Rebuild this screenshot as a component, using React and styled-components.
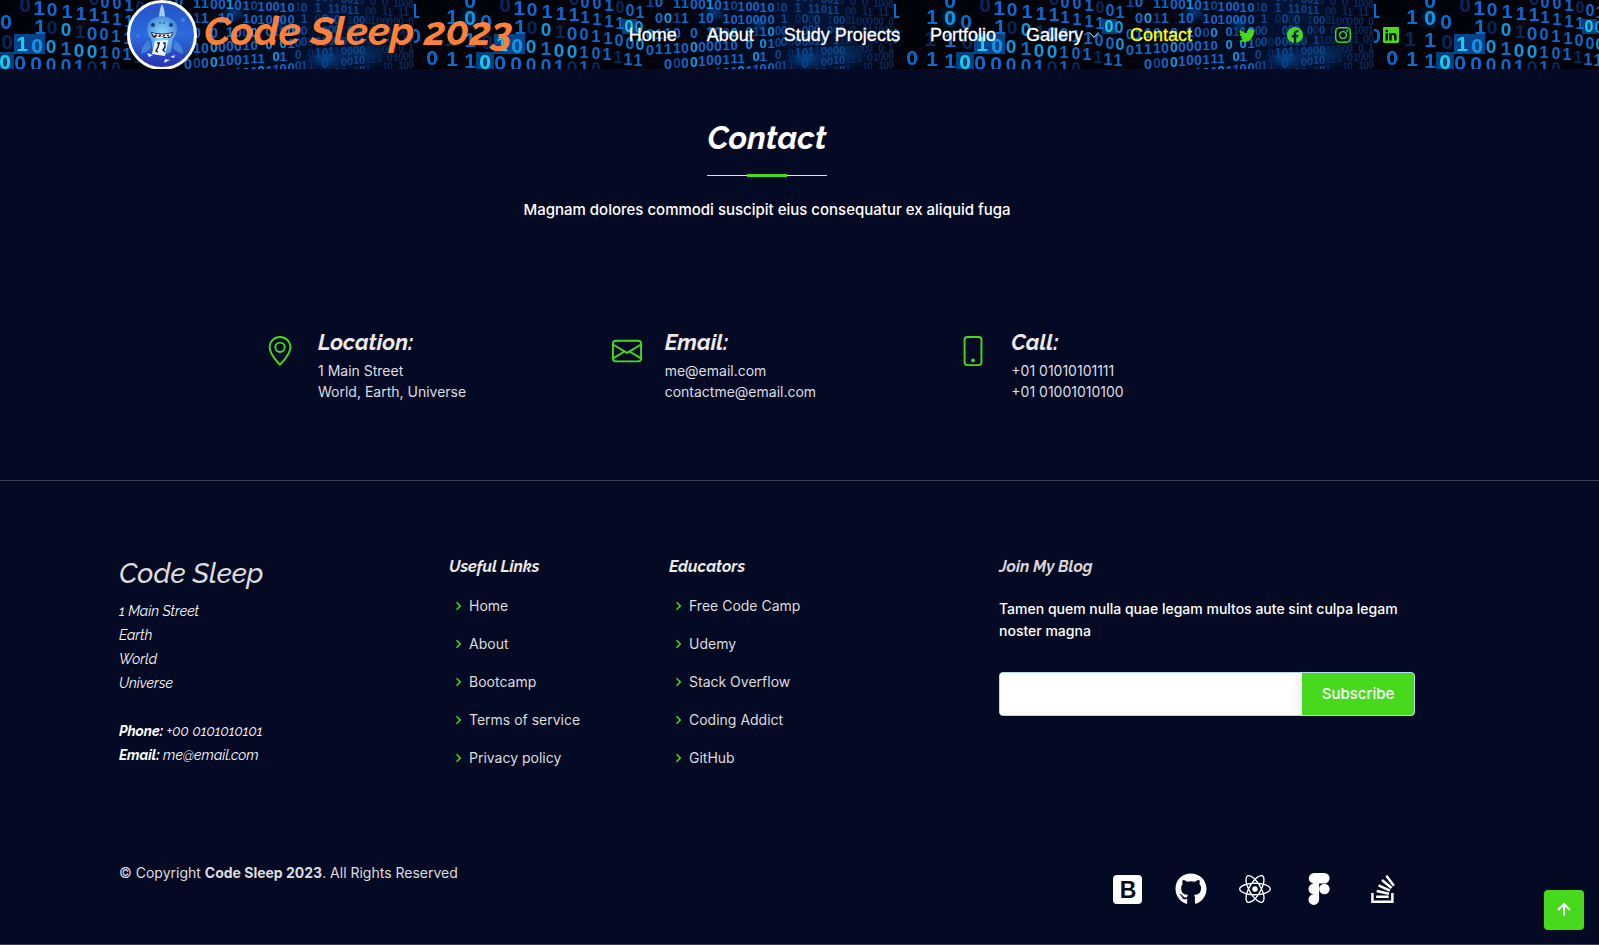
import React from 'react';
import styled, { createGlobalStyle } from 'styled-components';
import {
  BsTwitter, BsFacebook, BsInstagram, BsLinkedin, BsChevronDown,
  BsGeoAlt, BsEnvelope, BsPhone,
} from 'react-icons/bs';
import { BiChevronRight, BiUpArrowAlt } from 'react-icons/bi';
import { FaGithub, FaReact, FaStackOverflow } from 'react-icons/fa';

const GREEN = '#47d91c';
const NAVY = '#050a24';
const BODY_FONT = 'Inter, "Liberation Sans", sans-serif';
const HEAD_FONT = 'Raleway, Lato, "Open Sans", sans-serif';

const GlobalStyle = createGlobalStyle`
  *, *::before, *::after { box-sizing: border-box; }
  body {
    margin: 0;
    background: ${NAVY};
    color: #fff;
    font: 400 16px/24px ${BODY_FONT};
  }
  a { color: inherit; text-decoration: none; }
  h1, h2, h3, h4, p, ul, address { margin: 0; padding: 0; }
  ul { list-style: none; }
`;

const Page = styled.div`
  min-height: 100vh;
  display: flex;
  flex-direction: column;
  border-bottom: 1px solid #3a3d52;
`;

const Container = styled.div`
  max-width: 1320px;
  margin: 0 auto;
  padding: 0 12px;
`;

/* ---------- header ---------- */

const Header = styled.header`
  position: relative;
  padding-right: 65px;
  background: #01030b;
  overflow: hidden;
`;

const Rain = styled.svg`
  position: absolute;
  inset: 0;
  width: 100%;
  height: 100%;
`;

const HeaderRow = styled(Container)`
  position: relative;
  height: 69px;
  display: flex;
  align-items: center;
  padding: 0 28px 0 20px;
`;

const Brand = styled.a`
  display: flex;
  align-items: center;
  gap: 7px;
  margin-right: auto;
  color: #ff8139;
  font: italic 700 40px/50px ${HEAD_FONT};
  white-space: nowrap;

  svg { flex: none; }
  span { padding-bottom: 8px; }
`;

const NavList = styled.ul`
  display: flex;
  gap: 30px;
  font: 400 18px/28px "Liberation Sans", Arial, sans-serif;
  white-space: nowrap;
`;

const NavLink = styled.a`
  display: flex;
  align-items: center;
  gap: 5px;
  color: ${(p) => (p.$active ? '#ffff00' : '#fff')};
  -webkit-text-stroke: 0.3px currentColor;
  svg { width: 12px; height: 12px; }
`;

const Social = styled.div`
  display: flex;
  gap: 32px;
  margin-left: 47px;
  color: ${GREEN};
  a { display: block; }
  svg { display: block; width: 16px; height: 16px; }
`;

/* ---------- contact ---------- */

const Main = styled.main`
  padding: 48px 65px 78px 0;
  border-bottom: 1px solid #3d4156;
`;

const Title = styled.h2`
  position: relative;
  padding-bottom: 18px;
  margin-bottom: 20px;
  text-align: center;
  font: italic 700 32px/42px ${HEAD_FONT};

  &::before, &::after {
    content: '';
    position: absolute;
    left: 50%;
    transform: translateX(-50%);
  }
  &::before { bottom: 1px; width: 120px; height: 1px; background: #dde; }
  &::after { bottom: 0; width: 40px; height: 3px; background: ${GREEN}; }
`;

const Lead = styled.p`
  text-align: center;
  font-weight: 500;
  font-size: 15px;
  line-height: 26px;
`;

const InfoGrid = styled.div`
  max-width: 1040px;
  margin: 105px auto 0;
  display: grid;
  grid-template-columns: repeat(3, 1fr);
`;

const InfoItem = styled.div`
  display: grid;
  grid-template-columns: 32px 1fr;
  column-gap: 22px;
  padding-left: 17px;
  font-size: 14px;
  line-height: 21px;
  color: #dcdde2;

  > svg { width: 30px; height: 30px; margin-top: 8px; color: ${GREEN}; justify-self: center; }
`;

const InfoTitle = styled.h4`
  margin-bottom: 4px;
  font: italic 700 22px/28px ${HEAD_FONT};
  color: #ebe8e8;
`;

/* ---------- footer ---------- */

const Footer = styled.footer`
  flex: 1;
  padding: 74px 65px 0 0;
`;

const FooterGrid = styled.div`
  display: grid;
  grid-template-columns: 3fr 2fr 3fr 4fr;
  margin: 0 -12px;
  > * { padding: 0 12px; }
`;

const Company = styled.address`
  font: italic 400 14px/24px ${HEAD_FONT};
`;

const CompanyName = styled.h3`
  margin-bottom: 6px;
  font: italic 500 28px/38px ${HEAD_FONT};
  color: #dcdcdc;
`;

const ColumnTitle = styled.h4`
  font: italic 700 16px/24px ${HEAD_FONT};
  color: ${(p) => (p.$muted ? '#dcd6d8' : '#ebe8e8')};
`;

const LinkList = styled.ul`
  margin-top: 15px;
  display: grid;
  gap: 14px;
  font-size: 14px;
  line-height: 24px;
  color: #dcdcdc;
`;

const FooterLink = styled.a`
  display: flex;
  align-items: center;
  svg { width: 18px; height: 18px; margin-right: 2px; color: ${GREEN}; }
`;

const BlogText = styled.p`
  margin: 19px 0 30px;
  font-weight: 500;
  font-size: 14px;
  line-height: 22px;
`;

const Subscribe = styled.form`
  display: flex;
  height: 44px;
  border: 1px solid #b5d9f5;
  border-radius: 4px;
  background: #fff;
  overflow: hidden;

  input {
    flex: 1;
    min-width: 0;
    padding: 0 10px;
    border: 0;
    outline: 0;
    font: 400 16px/24px ${BODY_FONT};
  }
  button {
    width: 112px;
    border: 0;
    padding: 0;
    background: ${GREEN};
    color: #fff;
    font: 500 15px/24px ${BODY_FONT};
    box-shadow: 0 2px 15px rgba(0, 0, 0, 0.12);
    cursor: pointer;
  }
`;

const FooterBottom = styled.div`
  display: flex;
  justify-content: space-between;
  align-items: flex-start;
  margin-top: 91px;
  padding-right: 16px;
  font-size: 14px;
  line-height: 24px;
  color: #dcdcdc;
`;

const Tools = styled.div`
  display: flex;
  gap: 32px;
  padding-top: 12px;
  color: #fff;
  svg { display: block; width: 32px; height: 32px; }
`;

const BackTop = styled.button`
  position: fixed;
  right: 15px;
  bottom: 15px;
  width: 40px;
  height: 40px;
  display: grid;
  place-items: center;
  padding: 0;
  border: 0;
  border-radius: 4px;
  background: ${GREEN};
  color: #fff;
  cursor: pointer;
  svg { width: 24px; height: 24px; }
`;

/* ---------- binary backdrop ---------- */

/* [digit, x, y, level] — level 0 faint, 1 normal, 2 light, 3 glowing */
const NEAR = [
  [1, 0, 10, 1], [0, 1, 35, 1], [0, 18, 57, 1], [1, 38, 16, 1], [1, 38, 58, 1],
  [0, 56, 0, 1], [0, 56, 17, 2], [1, 56, 39, 1], [1, 56, 60, 1], [1, 36, 38, 0],
  [0, 72, 21, 1], [0, 71, 61, 3], [0, 91, 4, 0], [0, 73, 41, 0],
  [1, 88, 43, 3], [0, 86, 62, 1], [0, 103, 45, 2], [0, 102, 63, 1],
  [1, 105, 7, 1], [1, 106, 26, 1], [0, 118, 9, 1], [0, 118, 27, 0], [0, 117, 46, 2], [0, 117, 64, 1],
  [1, 133, 11, 1], [0, 132, 29, 2], [1, 132, 48, 1], [0, 132, 65, 1],
  [1, 147, 13, 1], [1, 146, 31, 0], [0, 145, 50, 2], [1, 145, 66, 1],
  [1, 160, 14, 1], [0, 158, 33, 1], [0, 158, 51, 2], [0, 158, 67, 0], [0, 160, -2, 0],
  [0, 171, 2, 1], [1, 171, 17, 1], [0, 170, 34, 1], [1, 170, 52, 1], [1, 170, 67, 1],
  [0, 183, 3, 1], [1, 183, 19, 1], [1, 182, 36, 1], [0, 182, 53, 1], [0, 182, 68, 0],
  [1, 195, 5, 1], [1, 195, 21, 1], [1, 194, 38, 1], [1, 193, 54, 1],
  [0, 206, 7, 0], [1, 206, 23, 1], [0, 205, 40, 1], [1, 204, 57, 0],
  [0, 216, 10, 1], [0, 215, 26, 3], [0, 216, 43, 1], [1, 214, 59, 1],
  [1, 226, 12, 1], [0, 225, 27, 2], [0, 226, 44, 2], [1, 224, 60, 1],
];

function farDigits() {
  const out = [];
  let seed = 23;
  const rnd = () => {
    seed = (seed * 16807) % 2147483647;
    return seed / 2147483647;
  };
  let x = 236;
  while (x < 480) {
    const t = (x - 236) / 244;
    const step = 9 - 4 * t;
    const pitch = 16 - 6 * t;
    const tilt = (x - 236) * 0.1;
    for (let y = -30; y < 78; y += pitch) {
      const py = y + tilt * (1 - (y + 20) / 160);
      const r = rnd();
      const digit = rnd() > 0.45 ? 0 : 1;
      if (r < 0.2 || py < -4 || py > 76) continue;
      const shade = t > 0.8 ? 0 : t > 0.5 ? (r > 0.4 ? 4 : 0) : r > 0.88 ? 2 : r > 0.35 ? 1 : 4;
      out.push([digit, Math.round(x), Math.round(py), shade, Math.round(15 - 5 * t)]);
    }
    x += step;
  }
  return out;
}

const DIGITS = [...NEAR.map((d) => [...d, d[1] < 110 ? 21 : d[1] < 165 ? 19 : 16]), ...farDigits()];
const SHADES = ['#06275c', '#0a6ad0', '#0b9be6', '#12d0f4', '#08468f'];

function BinaryRain() {
  return (
    <Rain aria-hidden="true">
      <defs>
        <radialGradient id="glow">
          <stop offset="0" stopColor="#0879e8" stopOpacity="0.7" />
          <stop offset="1" stopColor="#0548a0" stopOpacity="0" />
        </radialGradient>
        <linearGradient id="haze">
          <stop offset="0" stopColor="#021a4a" stopOpacity="0" />
          <stop offset="0.7" stopColor="#03296a" stopOpacity="0.45" />
          <stop offset="1" stopColor="#021435" stopOpacity="0.2" />
        </linearGradient>
        <pattern id="tile" x="-66" y="0" width="480" height="69" patternUnits="userSpaceOnUse">
          <rect width="480" height="69" fill="#01030b" />
          <rect x="230" width="250" height="69" fill="url(#haze)" />
          <rect x="80" y="34" width="31" height="20" fill="#075fc4" opacity="0.7" />
          <rect x="62" y="52" width="18" height="17" fill="#0869c4" opacity="0.6" />
          <rect x="208" y="19" width="15" height="15" fill="#0869c4" opacity="0.6" />
          <ellipse cx="56" cy="18" rx="12" ry="14" fill="url(#glow)" opacity="0.6" />
          <ellipse cx="300" cy="13" rx="14" ry="10" fill="url(#glow)" opacity="0.7" />
          <ellipse cx="392" cy="59" rx="24" ry="12" fill="url(#glow)" opacity="0.8" />
          <ellipse cx="345" cy="24" rx="10" ry="9" fill="url(#glow)" opacity="0.6" />
          <ellipse cx="430" cy="54" rx="34" ry="14" fill="url(#glow)" opacity="0.5" />
          <g fontFamily="Liberation Sans, sans-serif" textAnchor="middle">
            {DIGITS.map(([d, x, y, level, size], i) => (
              <text key={i} x={x} y={y + Math.round(size * 0.36)} fontSize={size} fontWeight="700" fill={SHADES[level]}>
                {d}
              </text>
            ))}
          </g>
        </pattern>
      </defs>
      <rect width="100%" height="100%" fill="url(#tile)" />
    </Rain>
  );
}

function SharkLogo() {
  return (
    <svg width="70" height="70" viewBox="0 0 70 70" aria-hidden="true">
      <defs>
        <linearGradient id="sea" x1="0" y1="0" x2="0" y2="1">
          <stop offset="0" stopColor="#2450c8" />
          <stop offset="0.5" stopColor="#2b6bdc" />
          <stop offset="1" stopColor="#2a2fb0" />
        </linearGradient>
        <radialGradient id="skin" cx="0.5" cy="0.5" r="0.6">
          <stop offset="0" stopColor="#9fe0fb" />
          <stop offset="0.6" stopColor="#5fa9e8" />
          <stop offset="1" stopColor="#3a79d2" />
        </radialGradient>
      </defs>
      <circle cx="35" cy="35" r="33.5" fill="url(#sea)" stroke="#fff" strokeWidth="3" />
      <circle cx="56" cy="20" r="2" fill="#4a83e6" />
      <circle cx="11" cy="36" r="2" fill="#3f78e0" />
      <path d="M22 40 Q14 46 14 54 Q20 52 24 48 Z M48 40 Q56 46 56 54 Q50 52 46 48 Z" fill="#4083d8" />
      <path d="M35 4 Q32 9 32 20 L38 20 Q38 9 35 4 Z" fill="#a5cdf2" />
      <path d="M35 16 Q23 17 20 26 Q19 34 24 39 L26 52 Q35 57 44 52 L46 39 Q51 34 50 26 Q47 17 35 16 Z" fill="url(#skin)" />
      <circle cx="26" cy="25" r="2" fill="#1a3878" />
      <circle cx="44" cy="25" r="2" fill="#1a3878" />
      <circle cx="33" cy="23" r="1" fill="#2e62a8" />
      <circle cx="37" cy="23" r="1" fill="#2e62a8" />
      <path d="M24 32 Q35 35 46 32 Q45 38 41 38 L29 38 Q25 38 24 32 Z" fill="#2a1c35" />
      <path d="M25 33 l2 3 2 -2 2 3 2 -3 2 3 2 -3 2 3 2 -3 2 3 2 -4 Q35 36 25 33 Z M28 38 l2 -2 2 2 2 -2 2 2 2 -2 2 2 2 -2 Z" fill="#fff" />
      <path d="M28 41 L41 40 L38 56 L25 54 Z" fill="#f5f8ff" />
      <path d="M30 43 l3 0 M32 43 l-1 4 l-2 4 l2 1 M36 43 l2 0 l0 4 l-2 3 l2 2" fill="none" stroke="#16254e" strokeWidth="1.5" />
      <path d="M20 53 l6 2 -4 2 Z M38 59 l5 1 -6 3 Z M43 57 l5 -2 -1 3 Z" fill="#dbe8ff" />
    </svg>
  );
}

function BootstrapLogo() {
  return (
    <svg viewBox="0 0 32 32" aria-hidden="true">
      <rect x="2" y="2" width="29" height="29" rx="4" fill="currentColor" />
      <text x="17" y="25" textAnchor="middle" fontFamily="Liberation Sans, sans-serif" fontWeight="700" fontSize="23" fill={NAVY}>B</text>
    </svg>
  );
}

function FigmaLogo() {
  return (
    <svg viewBox="0 0 32 32" fill="currentColor" aria-hidden="true">
      <path d="M11.3 0h10a5.3 5.3 0 0 1 0 10.6h-5.2v16a5.3 5.3 0 1 1-5.3-5.3 5.3 5.3 0 0 1 0-10.7 5.3 5.3 0 0 1 .5-10.6Z" />
      <circle cx="21.4" cy="16" r="5.3" />
    </svg>
  );
}

/* ---------- data ---------- */

const NAV = ['Home', 'About', 'Study Projects', 'Portfolio', 'Gallery', 'Contact'];
const SOCIAL = [['Twitter', BsTwitter], ['Facebook', BsFacebook], ['Instagram', BsInstagram], ['LinkedIn', BsLinkedin]];
const INFO = [
  ['Location:', BsGeoAlt, ['1 Main Street', 'World, Earth, Universe']],
  ['Email:', BsEnvelope, ['me@email.com', 'contactme@email.com']],
  ['Call:', BsPhone, ['+01 01010101111', '+01 01001010100']],
];
const LINKS = [
  ['Useful Links', ['Home', 'About', 'Bootcamp', 'Terms of service', 'Privacy policy']],
  ['Educators', ['Free Code Camp', 'Udemy', 'Stack Overflow', 'Coding Addict', 'GitHub']],
];
const TOOLS = [['Bootstrap', BootstrapLogo], ['GitHub', FaGithub], ['React', FaReact], ['Figma', FigmaLogo], ['Stack Overflow', FaStackOverflow]];

export default function App() {
  return (
    <Page>
      <GlobalStyle />
      <Header>
        <BinaryRain />
        <HeaderRow>
          <Brand href="#home">
            <SharkLogo />
            <span>Code Sleep 2023</span>
          </Brand>
          <nav>
            <NavList>
              {NAV.map((name) => (
                <li key={name}>
                  <NavLink href="#" $active={name === 'Contact'}>
                    {name}
                    {name === 'Gallery' && <BsChevronDown />}
                  </NavLink>
                </li>
              ))}
            </NavList>
          </nav>
          <Social>
            {SOCIAL.map(([name, Icon]) => (
              <a key={name} href="#" aria-label={name}><Icon /></a>
            ))}
          </Social>
        </HeaderRow>
      </Header>

      <Main>
        <Container>
          <Title>Contact</Title>
          <Lead>Magnam dolores commodi suscipit eius consequatur ex aliquid fuga</Lead>
          <InfoGrid>
            {INFO.map(([title, Icon, lines]) => (
              <InfoItem key={title}>
                <Icon />
                <div>
                  <InfoTitle>{title}</InfoTitle>
                  {lines.map((line) => <p key={line}>{line}</p>)}
                </div>
              </InfoItem>
            ))}
          </InfoGrid>
        </Container>
      </Main>

      <Footer>
        <Container>
          <FooterGrid>
            <Company>
              <CompanyName>Code Sleep</CompanyName>
              1 Main Street<br />
              Earth<br />
              World<br />
              Universe<br />
              <br />
              <strong>Phone:</strong> +00 0101010101<br />
              <strong>Email:</strong> me@email.com
            </Company>
            {LINKS.map(([title, items]) => (
              <div key={title}>
                <ColumnTitle>{title}</ColumnTitle>
                <LinkList>
                  {items.map((item) => (
                    <li key={item}>
                      <FooterLink href="#"><BiChevronRight />{item}</FooterLink>
                    </li>
                  ))}
                </LinkList>
              </div>
            ))}
            <div>
              <ColumnTitle $muted>Join My Blog</ColumnTitle>
              <BlogText>Tamen quem nulla quae legam multos aute sint culpa legam noster magna</BlogText>
              <Subscribe onSubmit={(e) => e.preventDefault()}>
                <input type="email" aria-label="Email address" />
                <button type="submit">Subscribe</button>
              </Subscribe>
            </div>
          </FooterGrid>
          <FooterBottom>
            <p>© Copyright <strong>Code Sleep 2023</strong>. All Rights Reserved</p>
            <Tools>
              {TOOLS.map(([name, Icon]) => (
                <a key={name} href="#" aria-label={name}><Icon /></a>
              ))}
            </Tools>
          </FooterBottom>
        </Container>
      </Footer>
      <BackTop type="button" aria-label="Back to top"><BiUpArrowAlt /></BackTop>
    </Page>
  );
}
